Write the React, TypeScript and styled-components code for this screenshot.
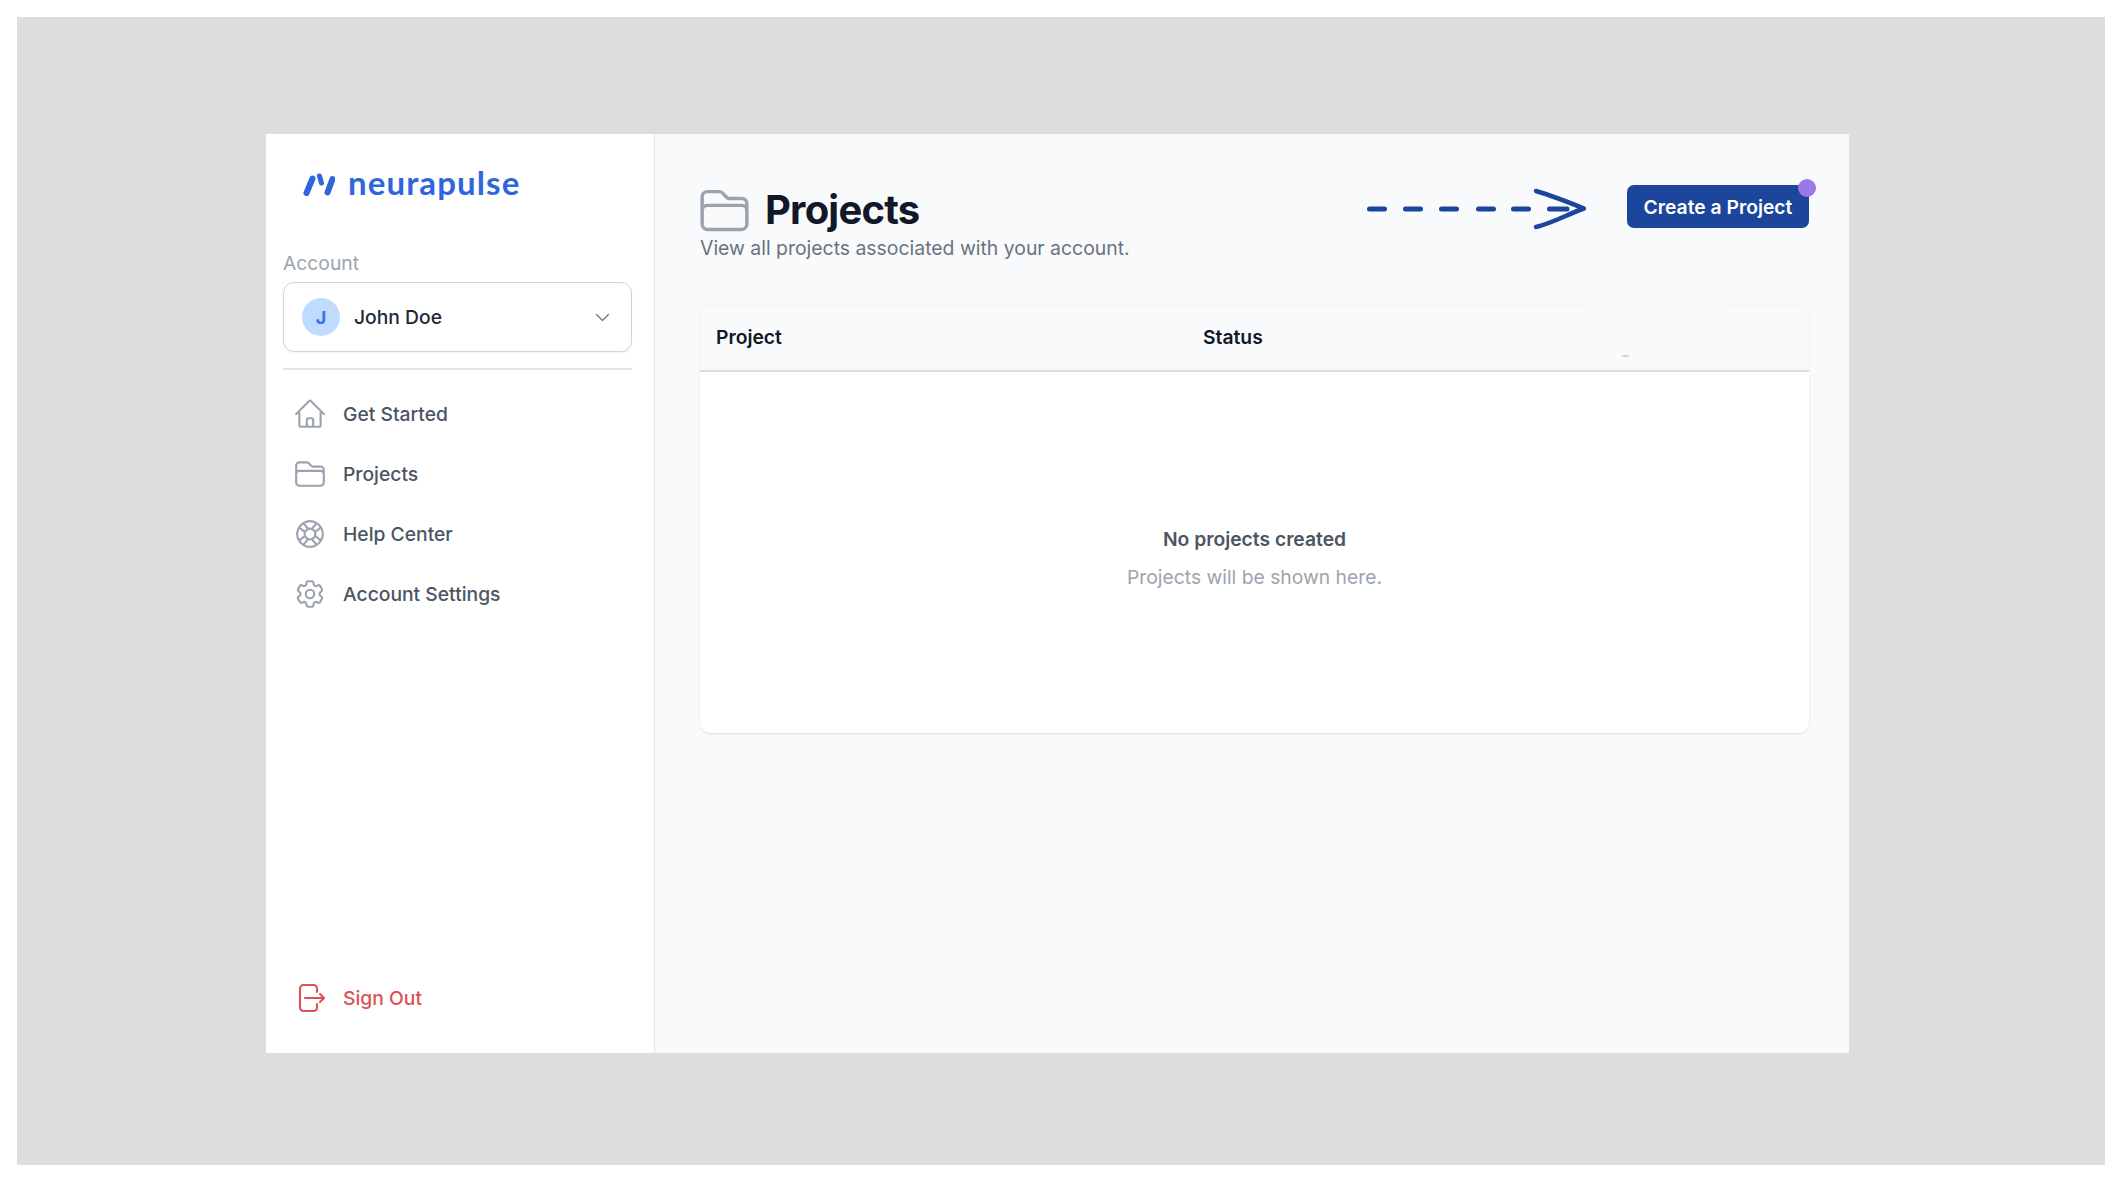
import React from 'react';
import styled, { createGlobalStyle } from 'styled-components';
import { HiOutlineHome, HiOutlineFolder, HiOutlineLifebuoy, HiOutlineCog6Tooth, HiOutlineChevronDown } from 'react-icons/hi2';

const Global = createGlobalStyle`
  html, body { margin: 0; padding: 0; background: #fff; }
  body { font-family: Inter, "Liberation Sans", sans-serif; -webkit-font-smoothing: antialiased; }
  * { box-sizing: border-box; }
`;

const Backdrop = styled.div`
  width: 2088px;
  height: 1148px;
  margin: 17px 23px 18px 17px;
  padding: 117px 0 0 249px;
  background: #dcdddf;
`;

const Window = styled.div`
  display: flex;
  width: 1583px;
  height: 919px;
  background: #f9fafb;
`;

const Sidebar = styled.aside`
  display: flex;
  flex-direction: column;
  width: 389px;
  padding: 0 22px 0 17px;
  background: #fff;
  border-right: 1px solid #e5e7eb;
`;

const Brand = styled.div`
  display: flex;
  align-items: center;
  gap: 13px;
  height: 38px;
  margin: 31px 0 0 20px;
  svg { width: 32px; height: 24px; flex: none; }
`;

const BrandName = styled.span`
  font-family: Lato, sans-serif;
  font-size: 33px;
  font-weight: 700;
  letter-spacing: 1.1px;
  color: #2f66dc;
  line-height: 1;
  position: relative;
  top: -2px;
`;

const FieldLabel = styled.div`
  margin-top: 48px;
  font-size: 19.3px;
  line-height: 24px;
  color: #9ca3af;
`;

const AccountSelect = styled.div`
  display: flex;
  align-items: center;
  height: 70px;
  margin-top: 7px;
  padding: 0 19px 0 18px;
  background: #fff;
  border: 1.5px solid #d1d5db;
  border-radius: 11px;
  box-shadow: 0 1px 2px rgba(0, 0, 0, .05);
  font-size: 19.3px;
  font-weight: 500;
  color: #1f2937;
`;

const Avatar = styled.span`
  display: flex;
  align-items: center;
  justify-content: center;
  width: 38px;
  height: 38px;
  margin-right: 14px;
  border-radius: 50%;
  background: #bfdbfe;
  color: #3b72e0;
  font-size: 18px;
  font-weight: 700;
`;

const Chevron = styled(HiOutlineChevronDown)`
  width: 19px;
  height: 19px;
  margin-left: auto;
  color: #6b7280;
`;

const Divider = styled.hr`
  height: 2px;
  margin: 16px 0 0;
  border: 0;
  background: #e0e2e6;
`;

const NavList = styled.nav`
  display: flex;
  flex-direction: column;
  margin-top: 14px;
`;

const NavItem = styled.a<{ $danger?: boolean }>`
  display: flex;
  align-items: center;
  gap: 16px;
  height: 60px;
  padding-left: 10px;
  font-size: 19.3px;
  font-weight: 500;
  color: ${p => (p.$danger ? '#dd5055' : '#4b5563')};
  svg { width: 34px; height: 34px; flex: none; color: ${p => (p.$danger ? '#dd5055' : '#9ca3af')}; }
`;

const SignOut = styled(NavItem)`
  margin-top: auto;
  margin-bottom: 25px;
`;

const Main = styled.main`
  flex: 1;
  padding: 0 40px 0 45px;
`;

const PageHeader = styled.header`
  display: flex;
  justify-content: space-between;
  height: 170px;
  padding-top: 51px;
`;

const TitleRow = styled.div`
  display: flex;
  align-items: center;
  gap: 13px;
  height: 50px;
  margin: 0 0 0 -3px;
  svg { width: 55px; height: 55px; color: #9ca3af; }
`;

const Title = styled.h1`
  margin: -2px 0 0;
  font-size: 40px;
  font-weight: 700;
  letter-spacing: -0.8px;
  color: #111827;
`;

const Subtitle = styled.p`
  margin: 1px 0 0;
  font-size: 19.4px;
  line-height: 24px;
  color: #6b7280;
`;

const Actions = styled.div`
  display: flex;
  align-items: flex-start;
  gap: 40px;
  svg { width: 224px; height: 44px; margin-top: 2px; flex: none; }
`;

const CreateButton = styled.button`
  position: relative;
  width: 182px;
  height: 43px;
  padding: 0;
  border: 0;
  border-radius: 7px;
  background: #1c459c;
  color: #fff;
  font: 600 19.3px Inter, sans-serif;
`;

const PulseDot = styled.span`
  position: absolute;
  top: -6px;
  right: -7px;
  width: 18px;
  height: 18px;
  border-radius: 50%;
  background: #9b77e8;
`;

const Card = styled.section`
  position: relative;
  height: 429px;
  background: #fff;
  border-top: 1px solid #f3f4f6;
  border-radius: 10px;
  box-shadow: 0 1px 2px rgba(0, 0, 0, .12);

  /* faint paste marks left in the screenshot */
  &::before {
    content: '';
    position: absolute;
    top: -13px;
    left: 883px;
    width: 144px;
    height: 12px;
    background: #fafafb;
    border-top: 1px solid #f4f4f6;
  }
  &::after {
    content: '';
    position: absolute;
    top: 50px;
    left: 922px;
    width: 7px;
    height: 2px;
    border-radius: 0 0 4px 4px;
    background: #cfd1d6;
  }
`;

const TableHead = styled.div`
  display: grid;
  grid-template-columns: 487px 1fr;
  align-items: center;
  height: 67px;
  padding: 0 0 1px 16px;
  background: #f9fafb;
  border-radius: 10px 10px 0 0;
  border-bottom: 2px solid #d9dce3;
  font-size: 19.3px;
  font-weight: 600;
  color: #111827;
`;

const EmptyState = styled.div`
  padding-top: 153px;
  text-align: center;
`;

const EmptyTitle = styled.div`
  font-size: 19.3px;
  line-height: 28px;
  font-weight: 600;
  color: #4b5563;
`;

const EmptyHint = styled.div`
  margin-top: 10px;
  font-size: 19.3px;
  line-height: 28px;
  color: #9ca3af;
`;

const LogoMark = () => (
  <svg viewBox="0 0 32 24" fill="none" stroke="#2f66dc" strokeLinecap="round">
    <path d="M3.500 21 9.500 6.500" strokeWidth="6" />
    <path d="M16.500 4 18.500 11" strokeWidth="5" />
    <path d="M24.500 20.500 29.500 7" strokeWidth="6" />
  </svg>
);

const SignOutIcon = () => (
  <svg viewBox="0 0 34 34" fill="none" stroke="currentColor" strokeWidth="2.1" strokeLinecap="round" strokeLinejoin="round">
    <path d="M24 11V7.500A3.500 3.500 0 0 0 20.500 4H10.500A3.500 3.500 0 0 0 7 7.500V26.500A3.500 3.500 0 0 0 10.500 30H20.500A3.500 3.500 0 0 0 24 26.500V23" />
    <path d="M12 17H31" />
    <path d="M27 13L31 17L27 21" />
  </svg>
);

const DashedArrow = () => (
  <svg viewBox="0 0 224 44" fill="none" stroke="#1c459c" strokeLinecap="round" strokeLinejoin="round">
    <path strokeWidth="5" d="M6.500 22H21.500M42.500 22H57.500M78.500 22H93.500M115.500 22H130.500M150.500 22H165.500M186.500 22H204" />
    <path strokeWidth="4.500" d="M173 4C190 9 205 15 221 21.500C205 27 190 36 173 40" />
  </svg>
);

export default function App() {
  return (
    <>
      <Global />
      <Backdrop>
        <Window>
          <Sidebar>
            <Brand>
              <LogoMark />
              <BrandName>neurapulse</BrandName>
            </Brand>
            <FieldLabel>Account</FieldLabel>
            <AccountSelect>
              <Avatar>J</Avatar>
              John Doe
              <Chevron />
            </AccountSelect>
            <Divider />
            <NavList>
              <NavItem><HiOutlineHome />Get Started</NavItem>
              <NavItem><HiOutlineFolder />Projects</NavItem>
              <NavItem><HiOutlineLifebuoy />Help Center</NavItem>
              <NavItem><HiOutlineCog6Tooth />Account Settings</NavItem>
            </NavList>
            <SignOut $danger><SignOutIcon />Sign Out</SignOut>
          </Sidebar>
          <Main>
            <PageHeader>
              <div>
                <TitleRow>
                  <HiOutlineFolder />
                  <Title>Projects</Title>
                </TitleRow>
                <Subtitle>View all projects associated with your account.</Subtitle>
              </div>
              <Actions>
                <DashedArrow />
                <CreateButton>
                  Create a Project
                  <PulseDot />
                </CreateButton>
              </Actions>
            </PageHeader>
            <Card>
              <TableHead>
                <span>Project</span>
                <span>Status</span>
              </TableHead>
              <EmptyState>
                <EmptyTitle>No projects created</EmptyTitle>
                <EmptyHint>Projects will be shown here.</EmptyHint>
              </EmptyState>
            </Card>
          </Main>
        </Window>
      </Backdrop>
    </>
  );
}
